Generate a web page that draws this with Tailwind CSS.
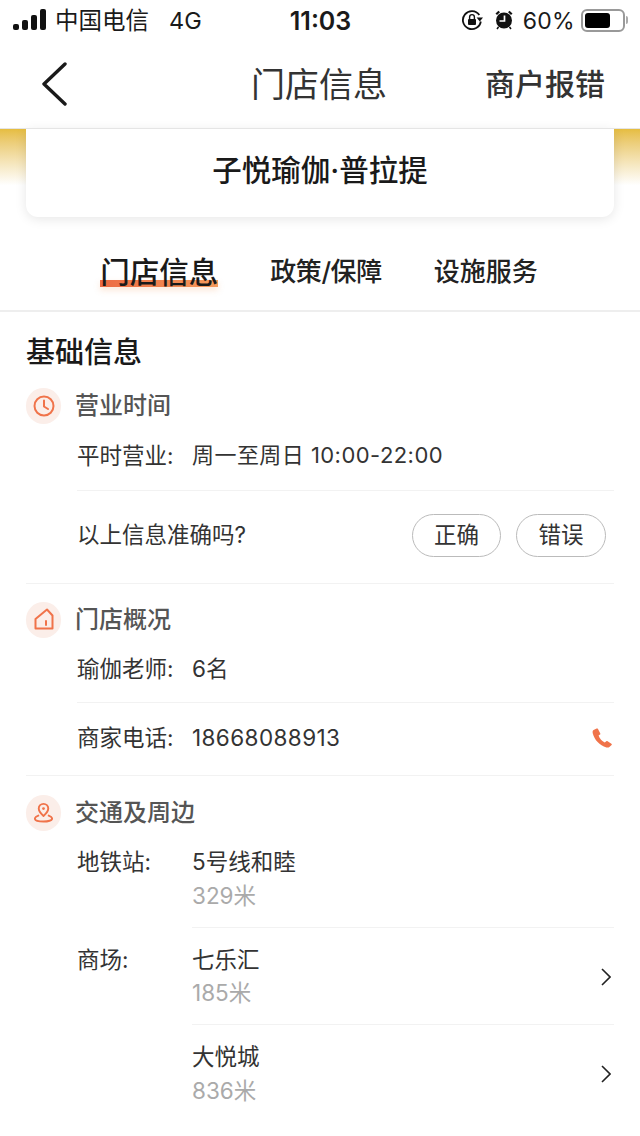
<!DOCTYPE html>
<html lang="zh-CN">
<head>
    <meta charset="UTF-8">
    <meta name="viewport" content="width=device-width, initial-scale=1.0">
    <title>门店信息</title>
    <script src="https://cdn.jsdelivr.net/npm/@tailwindcss/browser@4"></script>
</head>
<body class="bg-white">
<div class="w-[640px] h-[1136px] overflow-hidden bg-white text-[#222] font-['Inter','Noto_Sans_CJK_SC',sans-serif]">

    <!-- Status bar -->
    <div class="h-[40px] flex items-center justify-between pl-[13px] pr-[12px] text-[24px] text-[#1a1a1a]">
        <div class="flex items-center w-[230px]">
            <svg width="34" height="22" viewBox="0 0 34 22" fill="#111">
                <rect x="0" y="15" width="6" height="6" rx="2"/>
                <rect x="9" y="11" width="6" height="10" rx="2"/>
                <rect x="18" y="6" width="6" height="15" rx="2"/>
                <rect x="27" y="0" width="6" height="21" rx="2"/>
            </svg>
            <span class="ml-[8px] pt-[2px] text-[23.5px]">中国电信</span>
            <span class="ml-[20px] pt-[2px] text-[23.5px]">4G</span>
        </div>
        <div class="font-semibold pt-[3px] text-[25px]">11:03</div>
        <div class="flex items-center w-[230px] justify-end">
            <svg width="22" height="22" viewBox="0 0 22 22" fill="none" stroke="#111" stroke-width="1.8">
                <path d="M18.3 6A9 9 0 1 0 19.8 12.5"/>
                <path d="M15.6 8.6h6.4l-3.2 4z" fill="#111" stroke="none"/>
                <rect x="7" y="10" width="8" height="6" fill="#111" stroke="none" rx="1"/>
                <path d="M8.6 10V8a2.4 2.4 0 0 1 4.8 0V10" stroke-width="1.4"/>
            </svg>
            <svg class="ml-[12px]" width="18" height="20" viewBox="0 0 18 20" fill="#111">
                <circle cx="9" cy="10.5" r="8"/>
                <path d="M0.5 3.5L3.5 0.8L5 2.2L2 5Z"/>
                <path d="M17.5 3.5L14.5 0.8L13 2.2L16 5Z"/>
                <path d="M9.5 5.5V11H4.5" fill="none" stroke="#fff" stroke-width="1.7"/>
                <path d="M3.5 17l-1.5 2M14.5 17l1.5 2" stroke="#111" stroke-width="1.5"/>
            </svg>
            <span class="ml-[10px] pt-[2px] text-[23px] tracking-[0.3px]">60%</span>
            <div class="ml-[6px] w-[44px] h-[23px] border-2 border-[#999] rounded-[6px] p-[2px]">
                <div class="w-[25px] h-full bg-black rounded-[3px]"></div>
            </div>
            <div class="ml-[1px] w-[2px] h-[8px] bg-[#aaa] rounded-r-sm"></div>
        </div>
    </div>

    <!-- Nav -->
    <div class="h-[89px] relative flex items-center justify-center border-b border-[#e5e5e5]">
        <svg class="absolute left-[41px] top-[22px]" width="26" height="44" viewBox="0 0 26 44" fill="none" stroke="#1a1a1a" stroke-width="3.4" stroke-linecap="round" stroke-linejoin="round">
            <path d="M24 2L3 22l21 20"/>
        </svg>
        <span class="text-[34px] text-[#333] pt-[1px] -ml-[2px]">门店信息</span>
        <span class="absolute left-[485px] top-[24px] text-[30px] leading-[40px] font-medium text-[#333]">商户报错</span>
    </div>

    <!-- Shop card over the yellow banner -->
    <div class="h-[88px] px-[26px] bg-linear-to-b from-[#e6bd3f] to-white to-[64%]">
        <div class="h-full bg-white rounded-b-[12px] shadow-[0_2px_12px_rgba(0,0,0,0.1)] flex items-center justify-center text-[29.5px] font-medium text-[#1a1a1a] pb-[6px]">子悦瑜伽·普拉提</div>
    </div>

    <!-- Tabs -->
    <div class="h-[95px] flex justify-center items-start pt-[36px] pr-[2px] gap-[52px] border-b-2 border-[#eee] text-[26px] font-medium text-[#222]">
        <div class="relative text-[29.5px] leading-[40px] -mt-[1px] text-[#1a1a1a]">
            <div class="absolute left-0 right-0 top-[28px] h-[7px] bg-linear-to-r from-[#ec6a42] to-[#f49a5c] shadow-[0_3px_6px_rgba(244,154,92,0.25)]"></div>
            <span class="relative">门店信息</span>
        </div>
        <div class="leading-[38px] tracking-[-0.4px]">政策/保障</div>
        <div class="leading-[38px]">设施服务</div>
    </div>

    <div class="pl-[26px] pr-[26px]">
        <h2 class="h-[76px] pt-[21px] text-[29px] leading-[40px] font-medium text-[#1a1a1a]">基础信息</h2>

        <!-- 营业时间 -->
        <div class="flex items-center h-[36px] gap-[14px]">
            <div class="w-[35px] h-[36px] rounded-full bg-[#fbeee9] flex items-center justify-center">
                <svg width="22" height="22" viewBox="0 0 22 22" fill="none" stroke="#f0734a" stroke-width="2">
                    <circle cx="11" cy="11" r="9.5"/>
                    <path d="M11 5.5V11.5L15 14" stroke-linecap="round" stroke-linejoin="round"/>
                </svg>
            </div>
            <span class="text-[24px] text-[#555] font-medium">营业时间</span>
        </div>
        <div class="ml-[51px]">
            <div class="h-[67px] pb-[3px] flex items-center text-[22.5px] text-[#333] border-b border-[#f2f2f2]">
                <span class="w-[115px]">平时营业:</span><span class="text-[22px] tracking-[0.45px]">周一至周日 10:00-22:00</span>
            </div>
            <div class="h-[92px] flex items-center justify-between pr-[8px] pb-[4px]">
                <span class="text-[22.5px] text-[#333]">以上信息准确吗?</span>
                <div class="flex gap-[15px]">
                    <button class="w-[89px] h-[43px] rounded-full border border-[#bbb] text-[22.5px] text-[#333]">正确</button>
                    <button class="w-[90px] h-[43px] rounded-full border border-[#bbb] text-[22.5px] text-[#333]">错误</button>
                </div>
            </div>
        </div>

        <!-- 门店概况 -->
        <div class="border-t border-[#f2f2f2] pt-[18px]">
            <div class="flex items-center h-[36px] gap-[14px]">
                <div class="w-[35px] h-[36px] rounded-full bg-[#fbeee9] flex items-center justify-center">
                    <svg class="mb-[2px]" width="20" height="22" viewBox="0 0 20 22" fill="none" stroke="#f0734a" stroke-width="2" stroke-linejoin="round">
                        <path d="M1.5 11L13 1.5L18.5 7.5V20.5H1.5Z"/>
                        <path d="M12 13V17" stroke-linecap="round"/>
                    </svg>
                </div>
                <span class="text-[24px] text-[#555] font-medium">门店概况</span>
            </div>
            <div class="ml-[51px]">
                <div class="h-[65px] pb-[2px] flex items-center text-[22.5px] text-[#333] border-b border-[#f2f2f2]">
                    <span class="w-[115px]">瑜伽老师:</span><span>6名</span>
                </div>
                <div class="h-[72px] pb-[3px] flex items-center justify-between text-[22.5px] text-[#333]">
                    <div class="flex"><span class="w-[115px]">商家电话:</span><span class="tracking-[0.4px]">18668088913</span></div>
                    <svg class="mr-[2px]" width="20" height="20" viewBox="0 0 20 20" fill="#f0734a">
                        <path d="M4.6 0.6L1.6 2C0.6 2.6 0.4 3.6 0.8 5.4C2.4 11.6 7.6 17.4 14.4 19.4C15.6 19.7 16.6 19.6 17.4 18.9L19.6 17C20 16.6 19.8 16 19.4 15.7L15.6 13.2C15.2 12.9 14.7 13 14.3 13.3L12.8 14.6C10 13.4 7.6 10.6 6.6 7.6L8 6.6C8.4 6.3 8.5 5.8 8.3 5.4L6 1C5.7 0.5 5.1 0.4 4.6 0.6Z"/>
                    </svg>
                </div>
            </div>
        </div>

        <!-- 交通及周边 -->
        <div class="border-t border-[#f2f2f2] pt-[19px]">
            <div class="flex items-center h-[36px] gap-[14px]">
                <div class="w-[35px] h-[36px] rounded-full bg-[#fbeee9] flex items-center justify-center">
                    <svg class="mb-[2px]" width="19" height="21" viewBox="0 0 22 24" fill="none" stroke="#f0734a" stroke-width="2.2" stroke-linecap="round" stroke-linejoin="round">
                        <path d="M11 16C8 13.5 5.5 11 5.5 7.5A5.5 5.5 0 0 1 16.5 7.5C16.5 11 14 13.5 11 16Z"/>
                        <circle cx="11" cy="7.5" r="1.6" fill="#f0734a" stroke="none"/>
                        <path d="M5 15.5C2.5 16.5 1 17.5 1 19C1 21.2 5.5 22.5 11 22.5S21 21.2 21 19C21 17.5 19.5 16.5 17 15.5"/>
                    </svg>
                </div>
                <span class="text-[24px] text-[#555] font-medium">交通及周边</span>
            </div>
            <div class="ml-[51px] text-[22.5px] text-[#333]">
                <div class="flex h-[97px]">
                    <span class="w-[115px] pt-[16px] leading-[30px]">地铁站:</span>
                    <div class="flex-1 pt-[16px] border-b border-[#f2f2f2]">
                        <div class="leading-[30px]">5号线和睦</div>
                        <div class="leading-[38px] text-[#aaa]">329米</div>
                    </div>
                </div>
                <div class="flex h-[97px]">
                    <span class="w-[115px] pt-[17px] leading-[30px]">商场:</span>
                    <div class="flex-1 pt-[17px] border-b border-[#f2f2f2] flex items-start justify-between">
                        <div>
                            <div class="leading-[30px]">七乐汇</div>
                            <div class="leading-[36px] text-[#aaa]">185米</div>
                        </div>
                        <svg class="mt-[23px] mr-[3px]" width="10" height="18" viewBox="0 0 10 18" fill="none" stroke="#222" stroke-width="1.6"><path d="M1 1l8 8-8 8"/></svg>
                    </div>
                </div>
                <div class="flex h-[97px]">
                    <span class="w-[115px]"></span>
                    <div class="flex-1 pt-[17px] flex items-start justify-between">
                        <div>
                            <div class="leading-[30px]">大悦城</div>
                            <div class="leading-[38px] text-[#aaa]">836米</div>
                        </div>
                        <svg class="mt-[23px] mr-[3px]" width="10" height="18" viewBox="0 0 10 18" fill="none" stroke="#222" stroke-width="1.6"><path d="M1 1l8 8-8 8"/></svg>
                    </div>
                </div>
            </div>
        </div>
    </div>
</div>
</body>
</html>
